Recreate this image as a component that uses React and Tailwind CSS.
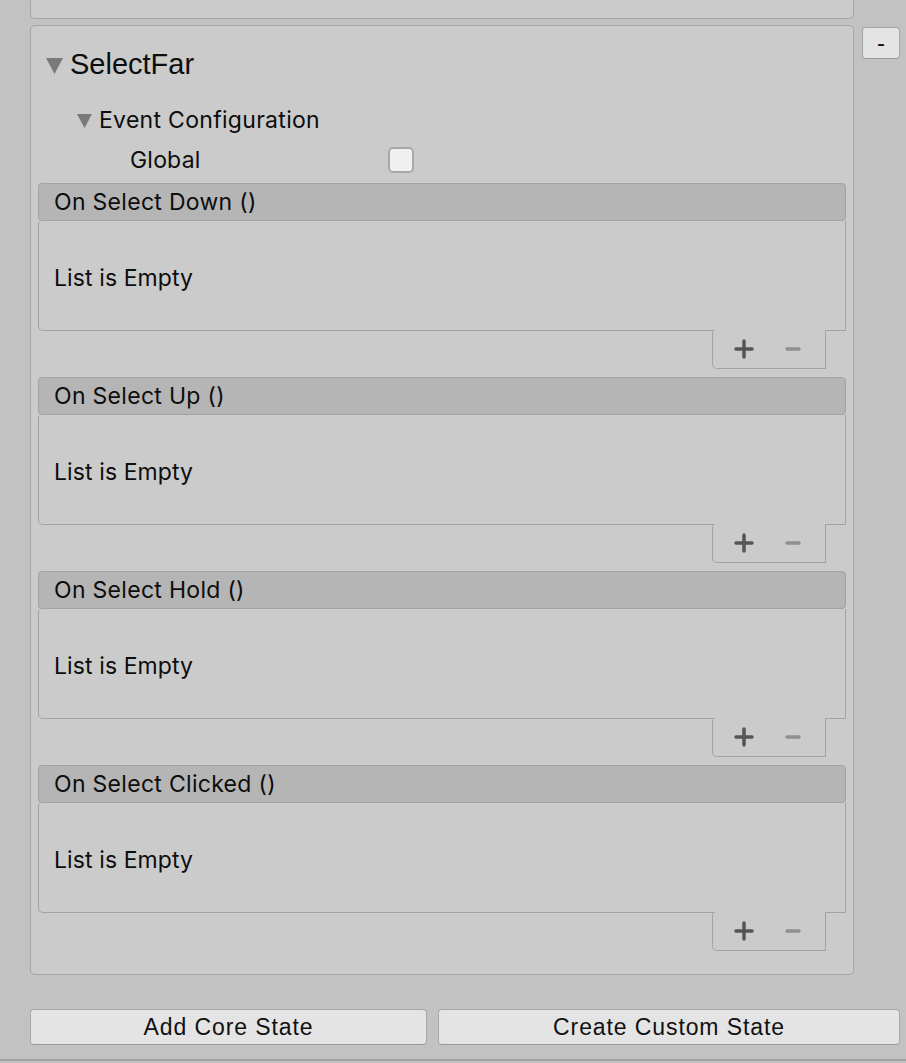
import React from "react";

const events = ["On Select Down ()", "On Select Up ()", "On Select Hold ()", "On Select Clicked ()"];

const Triangle = ({ size = 16 }) => (
  <svg width={size} height={size} viewBox="0 0 16 16">
    <polygon points="0,1 16,1 8,16" fill="#7a7a7a" />
  </svg>
);

const EventBlock = ({ title }) => (
  <div className="flex flex-col">
    <div className="h-[38px] flex items-center pl-[15px] pt-[1px] bg-[#b5b5b5] border border-[#a2a2a2] rounded-[4px] text-[23px] tracking-[0.3px] text-[#0d0d0d]">
      {title}
    </div>
    <div className="h-[110px] flex items-center pl-[15px] pt-[5px] border-x border-b border-[#a2a2a2] rounded-bl-[5px] rounded-tl-[3px] text-[23px] tracking-[0.1px] text-[#0d0d0d]">
      List is Empty
    </div>
    <div className="flex justify-end pr-[20px]">
      <div className="w-[114px] h-[39px] -mt-px bg-[#cbcbcb] border-x border-b border-[#a2a2a2] rounded-bl-[5px] rounded-tl-[4px] flex items-center">
        <svg className="ml-[21px]" width="20" height="20" viewBox="0 0 20 20">
          <path d="M10 2v16M2 10h16" stroke="#555555" strokeWidth="3.5" strokeLinecap="round" />
        </svg>
        <svg className="ml-[31px]" width="16" height="6" viewBox="0 0 16 6">
          <path d="M2 3h12" stroke="#909090" strokeWidth="3.5" strokeLinecap="round" />
        </svg>
      </div>
    </div>
  </div>
);

export default function App() {
  return (
    <div className="w-[906px] h-[1063px] bg-[#c2c2c2] overflow-hidden flex flex-col" style={{ fontFamily: "Inter, 'Noto Sans', sans-serif" }}>
      {/* previous panel tail */}
      <div className="ml-[30px] w-[824px] h-[19px] bg-[#cbcbcb] border-x border-b border-[#a5a5a5] rounded-b-[5px]" />

      <div className="flex mt-[6px]">
        <div className="ml-[30px] w-[824px] bg-[#cbcbcb] border border-[#a5a5a5] rounded-[5px] pt-[19px] pb-[23px] px-[7px] flex flex-col">
          <div className="h-[40px] flex items-center pl-[8px]">
            <Triangle size={17} />
            <span className="ml-[7px] text-[29px] text-[#0d0d0d]" style={{ fontFamily: "'Liberation Sans', Arial, sans-serif" }}>
              SelectFar
            </span>
          </div>
          <div className="h-[28px] mt-[21px] flex items-center pl-[39px]">
            <Triangle size={15} />
            <span className="ml-[7px] text-[23px] tracking-[0.3px] text-[#0d0d0d]">Event Configuration</span>
          </div>
          <div className="h-[28px] mt-[12px] flex items-center pl-[92px]">
            <span className="w-[258px] text-[23px] tracking-[0.2px] text-[#0d0d0d]">Global</span>
            <div className="w-[26px] h-[26px] bg-[#f0f0f0] border-2 border-[#a8a8a8] rounded-[5px]" />
          </div>
          <div className="mt-[9px] flex flex-col gap-[8px]">
            {events.map((e) => (
              <EventBlock key={e} title={e} />
            ))}
          </div>
        </div>
        <div className="ml-[8px] mt-[2px] w-[38px] h-[32px] bg-[#e4e4e4] border border-[#a5a5a5] border-b-[#999999] rounded-[4px] flex items-center justify-center text-[24px] text-[#111]" style={{ fontFamily: "'Liberation Sans', Arial, sans-serif" }}>
          -
        </div>
      </div>

      <div className="flex mt-[34px] ml-[30px] gap-[11px]" style={{ fontFamily: "'Liberation Sans', Arial, sans-serif" }}>
        <div className="w-[397px] h-[36px] bg-[#e4e4e4] border border-[#a8a8a8] border-b-[#999999] rounded-[4px] flex items-center justify-center text-[23px] tracking-[0.9px] text-[#111]">
          Add Core State
        </div>
        <div className="w-[462px] h-[36px] bg-[#e4e4e4] border border-[#a8a8a8] border-b-[#999999] rounded-[4px] flex items-center justify-center text-[23px] tracking-[0.9px] text-[#111]">
          Create Custom State
        </div>
      </div>
      <div className="mt-[14px] h-[2px] bg-[#a0a0a0]" />
    </div>
  );
}
